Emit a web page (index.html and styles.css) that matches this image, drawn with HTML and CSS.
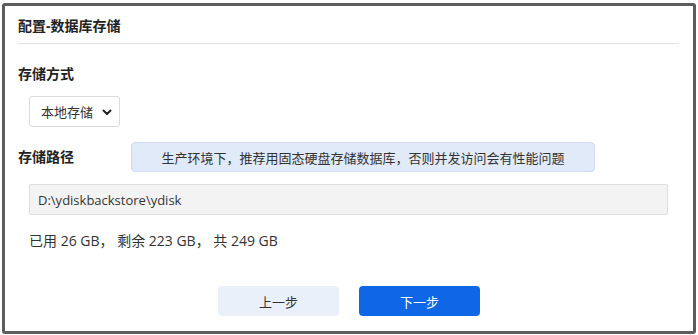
FILE: index.html
```html
<!DOCTYPE html>
<html lang="zh-CN">
<head>
<meta charset="utf-8">
<link rel="stylesheet" href="styles.css">
</head>
<body>
<div class="frame">
  <div class="header">配置-数据库存储</div>
  <div class="body">
    <div class="label first">存储方式</div>
    <div class="select">
      <span>本地存储</span>
      <svg class="chev" width="10" height="7" viewBox="0 0 10 7"><path d="M1.5 1.5 L5 5 L8.5 1.5" fill="none" stroke="#222" stroke-width="2" stroke-linecap="round" stroke-linejoin="round"/></svg>
    </div>
    <div class="path-row">
      <div class="label">存储路径</div>
      <div class="tip">生产环境下，推荐用固态硬盘存储数据库，否则并发访问会有性能问题</div>
    </div>
    <div class="input">D:\ydiskbackstore\ydisk</div>
    <div class="usage">已用 26 GB， 剩余 223 GB， 共 249 GB</div>
    <div class="actions">
      <button class="btn prev">上一步</button>
      <button class="btn next">下一步</button>
    </div>
  </div>
</div>
</body>
</html>
```

FILE: styles.css
```css
* { box-sizing: border-box; }
html, body { margin: 0; padding: 0; background: #fff; }
body {
  font-family: "Open Sans", "Noto Sans CJK SC", sans-serif;
  color: #333;
  padding: 3px 0 0 2px;
}
.frame {
  width: 694px;
  height: 331px;
  border: 3px solid #5c5c5c;
  border-radius: 3px;
  background: #fff;
}
.header {
  margin: 0 14px 0 13px;
  height: 38px;
  border-bottom: 1px solid #e4e4e4;
  display: flex;
  align-items: center;
  font-size: 14px;
  font-weight: bold;
  color: #222;
  padding-top: 1px;
}
.body {
  padding: 0 13px;
}
.label {
  font-size: 14px;
  font-weight: bold;
  color: #222;
  line-height: 20px;
}
.label.first { margin-top: 20px; }
.select {
  margin: 12px 0 0 11px;
  width: 91px;
  height: 31px;
  border: 1px solid #dcdcdc;
  border-radius: 3px;
  display: flex;
  align-items: center;
  justify-content: space-between;
  padding: 0 7px 0 11px;
  font-size: 13px;
  color: #333;
}
.chev { display: block; margin-top: 1px; }
.path-row {
  display: flex;
  align-items: center;
  margin-top: 15px;
}
.path-row .label { width: 113px; }
.tip {
  width: 464px;
  height: 30px;
  background: #e0eaf8;
  border: 1px solid #cfdcef;
  border-radius: 4px;
  display: flex;
  align-items: center;
  justify-content: center;
  font-size: 13px;
  color: #333;
}
.input {
  margin: 12px 0 0 11px;
  width: 639px;
  height: 31px;
  background: #f3f3f3;
  border: 1px solid #dedede;
  border-radius: 2px;
  display: flex;
  align-items: center;
  padding-left: 8px;
  font-size: 13px;
  color: #333;
}
.usage {
  margin: 16px 0 0 11px;
  line-height: 20px;
  font-size: 14px;
  color: #333;
}
.actions {
  display: flex;
  justify-content: center;
  gap: 20px;
  margin-top: 35px;
  margin-left: -13px;
  margin-right: -13px;
}
.btn {
  width: 121px;
  height: 30px;
  border: none;
  border-radius: 4px;
  font-family: "Open Sans", "Noto Sans CJK SC", sans-serif;
  font-size: 13px;
  padding: 0;
}
.prev { background: #e9f0f9; color: #333; }
.next { background: #0f66e6; color: #fff; }
```
